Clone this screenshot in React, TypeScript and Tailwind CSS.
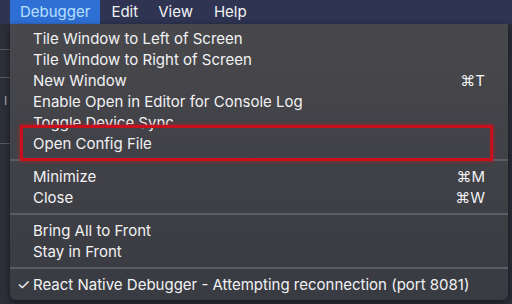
import React from "react";

type Item = { label: string; shortcut?: string; checked?: boolean };

const groups: Item[][] = [
  [
    { label: "Tile Window to Left of Screen" },
    { label: "Tile Window to Right of Screen" },
    { label: "New Window", shortcut: "⌘T" },
    { label: "Enable Open in Editor for Console Log" },
    { label: "Toggle Device Sync" },
    { label: "Open Config File" },
  ],
  [
    { label: "Minimize", shortcut: "⌘M" },
    { label: "Close", shortcut: "⌘W" },
  ],
  [{ label: "Bring All to Front" }, { label: "Stay in Front" }],
  [{ label: "React Native Debugger - Attempting reconnection (port 8081)", checked: true }],
];

function MenuRow({ item }: { item: Item }) {
  return (
    <div className="flex items-center h-[21px] pl-[7px] pr-[23px]">
      <span className="w-[16px] text-[15px] leading-none">{item.checked ? "✓" : ""}</span>
      <span className="flex-1 text-[15px] leading-none whitespace-nowrap">{item.label}</span>
      {item.shortcut && <span className="text-[15px] leading-none">{item.shortcut}</span>}
    </div>
  );
}

export default function App() {
  return (
    <div
      className="relative w-[512px] h-[304px] overflow-hidden bg-[#2b2e38] text-[#f2f2f4]"
      style={{ fontFamily: "Inter, 'Noto Sans', sans-serif" }}
    >
      {/* app behind the menu */}
      <div className="absolute left-0 top-[24px] w-[10px] h-[280px] bg-[#2c2f39]">
        <div className="mt-[25px] h-px bg-[#55585f]" />
        <div className="mt-[27px] h-px bg-[#55585f]" />
        <div className="mt-[17px] text-[12px] leading-none text-[#aaa] pl-[4px]">I</div>
        <div className="mt-[36px] h-px bg-[#55585f]" />
      </div>

      {/* menu bar */}
      <div className="flex h-[24px] items-center bg-[#2e3452] text-[15px]">
        <div className="ml-[10px] h-full flex items-center px-[10px] bg-[#2e6fd5] text-[#b9e0ff]">Debugger</div>
        <div className="ml-[11px]">Edit</div>
        <div className="ml-[20px]">View</div>
        <div className="ml-[21px]">Help</div>
      </div>

      {/* dropdown */}
      <div className="absolute left-[10px] top-[24px] w-[498px] rounded-b-[6px] bg-gradient-to-b from-[#48484c] to-[#393b42] shadow-[0_2px_6px_rgba(0,0,0,0.5)] pt-[4px] pb-[5px]">
        {groups.map((g, gi) => (
          <div key={gi}>
            {gi > 0 && <div className="my-[5px] h-[2px] bg-[#5b5d64]" />}
            {g.map((it) => (
              <MenuRow key={it.label} item={it} />
            ))}
          </div>
        ))}
      </div>

      {/* highlight box */}
      <div className="absolute left-[20px] top-[125px] w-[473px] h-[36px] border-[3px] border-[#c8101c] shadow-[0_0_4px_rgba(220,20,30,0.7)]" />
    </div>
  );
}
